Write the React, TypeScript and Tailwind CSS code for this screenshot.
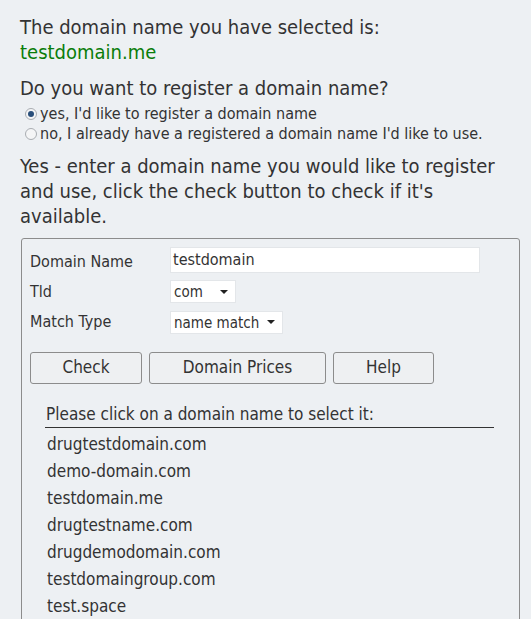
const font = { fontFamily: '"DejaVu Sans Condensed", "DejaVu Sans", sans-serif' };

const domains = [
  'drugtestdomain.com',
  'demo-domain.com',
  'testdomain.me',
  'drugtestname.com',
  'drugdemodomain.com',
  'testdomaingroup.com',
  'test.space',
];

function Radio({ checked }: { checked?: boolean }) {
  return (
    <span className="inline-flex w-[12px] h-[12px] mr-[3px] rounded-full border border-[#a9adb2] bg-[#f4f5f6] items-center justify-center">
      {checked && <span className="w-[6px] h-[6px] rounded-full bg-[#2a4f7a]" />}
    </span>
  );
}

function Select({ value, width }: { value: string; width: string }) {
  return (
    <div className={`flex items-center h-[23px] bg-white border border-[#e3e6e9] pl-[3px] pr-[7px] ${width}`}>
      <span className="flex-1 text-[15px] leading-[20px] pt-px">{value}</span>
      <span className="w-0 h-0 border-l-[4px] border-r-[4px] border-t-[4px] border-l-transparent border-r-transparent border-t-[#222]" />
    </div>
  );
}

export default function App() {
  return (
    <div className="min-h-screen bg-[#edf0f3] text-[#333] pl-5 pr-[10px] pt-[15px]" style={font}>
      <div className="text-[20px] leading-[25px]">
        <div>The domain name you have selected is:</div>
        <div className="text-[#0a7d0a]">testdomain.me</div>
      </div>

      <div className="mt-[11px] text-[20px] leading-[25px]">Do you want to register a domain name?</div>

      <div className="mt-[3px] pl-[5px] text-[16px] leading-[20px]">
        <div className="flex items-center"><Radio checked />yes, I'd like to register a domain name</div>
        <div className="flex items-center"><Radio />no, I already have a registered a domain name I'd like to use.</div>
      </div>

      <p className="mt-[10px] text-[20px] leading-[25px]">
        Yes - enter a domain name you would like to register and use, click the check button to check if it's available.
      </p>

      <div className="mt-[9px] ml-px w-[499px] border border-[#8c8c8c] rounded-[3px] pl-2 pt-2 pb-4">
        <div className="flex items-center h-[26px]">
          <span className="w-[140px] text-[16px] pt-[3px]">Domain Name</span>
          <div className="w-[310px] h-[26px] bg-white border border-[#e3e6e9] px-[2px] text-[16px] leading-[24px]">testdomain</div>
        </div>
        <div className="flex items-center mt-[6px]">
          <span className="w-[140px] text-[16px] pt-px">Tld</span>
          <Select value="com" width="w-[66px]" />
        </div>
        <div className="flex items-center mt-[6px]">
          <span className="w-[140px] text-[16px]">Match Type</span>
          <Select value="name match" width="w-[113px]" />
        </div>

        <div className="flex gap-[7px] mt-[18px]">
          <button className="w-[112px] h-[32px] border border-[#8c8c8c] rounded-[3px] bg-[#eef0f2] text-[17px]">Check</button>
          <button className="w-[177px] h-[32px] border border-[#8c8c8c] rounded-[3px] bg-[#eef0f2] text-[17px]">Domain Prices</button>
          <button className="w-[101px] h-[32px] border border-[#8c8c8c] rounded-[3px] bg-[#eef0f2] text-[17px]">Help</button>
        </div>

        <div className="mt-[18px] ml-[15px] w-[449px] border-b border-[#333] text-[17px] leading-[25px] pl-px">
          Please click on a domain name to select it:
        </div>
        <ul className="ml-[17px] text-[17px] leading-[27px] mt-[3px]">
          {domains.map(d => (
            <li key={d}>{d}</li>
          ))}
        </ul>
      </div>
    </div>
  );
}
